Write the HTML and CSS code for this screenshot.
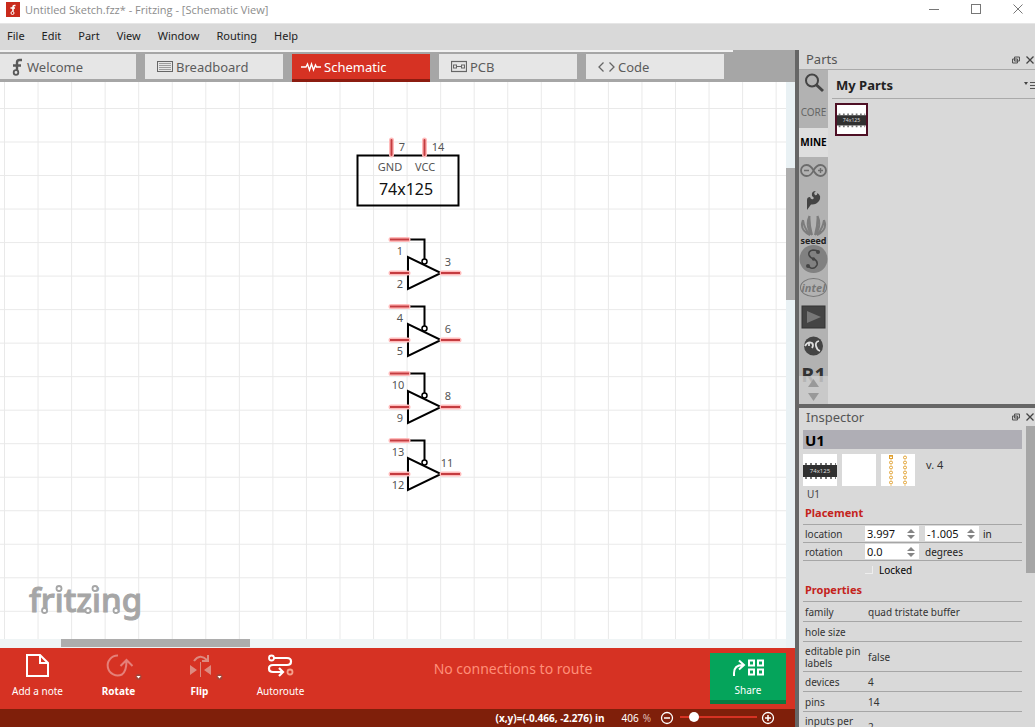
FILE: index.html
```html
<!DOCTYPE html>
<html lang="en">
<head>
<meta charset="utf-8">
<title>Untitled Sketch.fzz* - Fritzing - [Schematic View]</title>
<link rel="stylesheet" href="styles.css">
</head>
<body>
<div class="app">
  <header class="titlebar">
    <svg class="app-icon" width="14" height="15" viewBox="0 0 14 15"><rect width="14" height="15" fill="#c92a1c"/><path d="M9.500 3.500H8.500Q7 3.500 7 5V9.500M4.500 6H9" fill="none" stroke="#fff" stroke-width="1.600"/><circle cx="6.500" cy="11" r="1.500" fill="none" stroke="#fff"/></svg>
    <h1 class="title">Untitled Sketch.fzz* - Fritzing - [Schematic View]</h1>
    <div class="window-buttons">
      <button type="button" aria-label="Minimize"><svg width="10" height="10"><path d="M0 5.500H10" stroke="#777"/></svg></button>
      <button type="button" aria-label="Maximize"><svg width="10" height="10"><rect x=".5" y=".5" width="9" height="9" fill="none" stroke="#777"/></svg></button>
      <button type="button" aria-label="Close"><svg width="10" height="10"><path d="M.5.5L9.500 9.500M9.500.5L.5 9.500" stroke="#777"/></svg></button>
    </div>
  </header>
  <nav class="menubar">
    <button type="button">File</button><button type="button">Edit</button><button type="button">Part</button><button type="button">View</button><button type="button">Window</button><button type="button">Routing</button><button type="button">Help</button>
  </nav>
  <div class="workspace">
    <main class="editor">
      <div class="tab-highlight"></div>
      <nav class="tabs">
        <button type="button" class="tab tab-first"><svg width="16" height="20" viewBox="0 0 16 20"><path d="M13 3H10.500Q8 3 8 5.500V14M4 8.500H12" fill="none" stroke="#595959" stroke-width="2.400"/><circle cx="7" cy="15.500" r="2.300" fill="#e6e6e6" stroke="#595959" stroke-width="1.800"/></svg>Welcome</button>
        <button type="button" class="tab"><svg width="16" height="20" viewBox="0 0 16 20"><rect x=".5" y="4.500" width="15" height="10" fill="none" stroke="#666"/><path d="M2.500 6.500H14M2.500 8.500H14M2.500 10.500H14M2.500 12.500H14" stroke="#555" stroke-dasharray="1 1"/></svg>Breadboard</button>
        <button type="button" class="tab tab-active"><svg width="20" height="20" viewBox="0 0 20 20"><path d="M0 10H5L6.500 7L8.500 13L10.500 7L12.500 13L14.500 8L15.500 10H20" fill="none" stroke="#fff" stroke-width="1.400"/></svg>Schematic</button>
        <button type="button" class="tab"><svg width="16" height="20" viewBox="0 0 16 20"><rect x=".5" y="4.500" width="15" height="10" fill="none" stroke="#666" stroke-width="1.200"/><path d="M5.500 9.500H10.500" stroke="#666"/><rect x="2.500" y="8" width="3" height="3" fill="none" stroke="#666"/><rect x="10.500" y="8" width="3" height="3" fill="none" stroke="#666"/></svg>PCB</button>
        <button type="button" class="tab"><svg width="17" height="20" viewBox="0 0 17 20"><path d="M5.500 5.500L1 10L5.500 14.500M11.500 5.500L16 10L11.500 14.500" fill="none" stroke="#666" stroke-width="1.300"/></svg>Code</button>
      </nav>
      <div class="canvas-area">
        <svg class="canvas" role="img" aria-label="Schematic">
          <defs>
            <pattern id="grid" x="4" y="26" width="33.550" height="33.520" patternUnits="userSpaceOnUse"><path d="M0 .5H34M.5 0V34" stroke="#e9e9e9" fill="none"/></pattern>
            <g id="pin"><path d="M0 0H17" stroke="#fbb" stroke-width="5" stroke-linecap="round"/><path d="M-1 0H18" stroke="#c43c40" stroke-width="2"/></g>
            <g id="buffer">
              <path d="M408 157.500H424.500V177" class="wire"/>
              <path d="M408 175V207L441 191Z" class="wire"/>
              <circle cx="424.500" cy="179.500" r="2.500" fill="#fff" stroke="#000" stroke-width="1.500"/>
              <use href="#pin" x="391" y="157.500"/><use href="#pin" x="391" y="191"/><use href="#pin" x="442" y="191"/>
            </g>
          </defs>
          <rect width="100%" height="100%" fill="url(#grid)"/>
          <rect x="357.500" y="73.500" width="101" height="50" class="wire"/>
          <g stroke-linecap="round"><path d="M391.500 58V73M424.500 58V73" stroke="#fbb" stroke-width="5"/><path d="M391.500 58V73M424.500 58V73" stroke="#c43c40" stroke-width="2"/></g>
          <g class="pin-text">
            <text x="402" y="69">7</text><text x="438" y="69">14</text>
            <text x="390" y="89">GND</text><text x="425" y="89">VCC</text>
            <text x="400" y="173">1</text><text x="400" y="206">2</text><text x="448" y="184">3</text>
            <text x="400" y="240">4</text><text x="400" y="273">5</text><text x="448" y="251">6</text>
            <text x="398" y="307">10</text><text x="400" y="340">9</text><text x="448" y="318">8</text>
            <text x="398" y="374">13</text><text x="398" y="407">12</text><text x="447" y="385">11</text>
          </g>
          <text x="406" y="113" class="chip-name">74x125</text>
          <use href="#buffer"/><use href="#buffer" y="67"/><use href="#buffer" y="134"/><use href="#buffer" y="201"/>
        </svg>
        <svg class="watermark" width="120" height="40" viewBox="0 0 120 40"><text x="0" y="30">fritzing</text><g fill="#fff" stroke="#a6a6a6" stroke-width="1.800"><circle cx="30" cy="6.500" r="2.500"/><circle cx="66" cy="6.500" r="2.500"/><circle cx="15.500" cy="28.500" r="2.500"/><circle cx="59" cy="28.500" r="2.500"/><circle cx="87" cy="28.500" r="2.500"/></g></svg>
        <div class="vscroll"><div class="vthumb"></div></div>
        <div class="hscroll"><div class="hthumb"></div></div>
      </div>
      <div class="toolbar">
        <div class="tools">
          <button type="button" class="tool"><svg width="36" height="28" viewBox="0 0 36 28"><path d="M7 3H20L28 11V24H7Z M20 3V11H28" fill="none" stroke="#fff" stroke-width="2"/></svg>Add a note</button>
          <button type="button" class="tool tool-heavy"><svg width="56" height="28" viewBox="0 0 56 28"><path d="M27 3.500A10 10 0 1 0 31 22.500Q35.500 19 35.500 9M29.500 14L35.500 8L41.500 14" fill="none" stroke="#e58079" stroke-width="2"/><circle cx="47.500" cy="25" r="3" fill="#a64538"/><path d="M45.500 24H49.500L47.500 26.500Z" fill="#fff"/></svg>Rotate</button>
          <button type="button" class="tool tool-heavy"><svg width="56" height="28" viewBox="0 0 56 28"><path d="M22 9Q28 1 35 8M36 3V9H30" fill="none" stroke="#dd8a80" stroke-width="2"/><path d="M28.500 10V25" stroke="#dd8a80"/><path d="M18 13L25 18L18 23ZM39 13L32 18L39 23Z" fill="#dd8a80"/><circle cx="47.500" cy="25" r="3" fill="#a64538"/><path d="M45.500 24H49.500L47.500 26.500Z" fill="#fff"/></svg>Flip</button>
          <button type="button" class="tool"><svg width="36" height="28" viewBox="0 0 36 28"><path d="M11 6H24Q28 6 28 9.500T24 13H10Q6 13 6 16.500T10 20H19M16 16L20 20L16 24" fill="none" stroke="#fff" stroke-width="2.200"/><circle cx="8.500" cy="6" r="2.500" fill="none" stroke="#fff" stroke-width="1.800"/><circle cx="27" cy="20" r="2.500" fill="none" stroke="#f5a08c" stroke-width="1.800"/></svg>Autoroute</button>
        </div>
        <p class="routing-status">No connections to route</p>
        <button type="button" class="share"><svg width="34" height="18" viewBox="0 0 34 18"><path d="M3 17V14Q3 6 12 6M8 1.500L13 6L8 10.500" fill="none" stroke="#fff" stroke-width="2"/><path d="M18 1.500H23V6.500H18ZM27 1.500H32V6.500H27ZM18 10.500H23V15.500H18ZM27 10.500H32V15.500H27Z" fill="none" stroke="#fff" stroke-width="2"/></svg>Share</button>
      </div>
      <footer class="statusbar">
        <span class="coords">(x,y)=(-0.466, -2.276) in</span>
        <span class="zoom-value">406</span><span class="percent">%</span>
        <button type="button" class="zoom-button" aria-label="Zoom out"><svg width="14" height="14" viewBox="0 0 14 14"><circle cx="7" cy="7" r="5.500" fill="none" stroke="#fff" stroke-width="1.300"/><path d="M4 7H10" stroke="#fff" stroke-width="1.500"/></svg></button>
        <input class="zoom-slider" type="range" min="0" max="100" value="14" aria-label="Zoom">
        <button type="button" class="zoom-button" aria-label="Zoom in"><svg width="14" height="14" viewBox="0 0 14 14"><circle cx="7" cy="7" r="5.500" fill="none" stroke="#fff" stroke-width="1.300"/><path d="M4 7H10M7 4V10" stroke="#fff" stroke-width="1.500"/></svg></button>
      </footer>
    </main>
    <aside class="docks">
      <section class="dock parts">
        <div class="dock-header"><h2>Parts</h2>
          <button type="button" aria-label="Float parts"><svg width="8" height="8" viewBox="0 0 8 8"><path d="M2.500 1H7.500V5H2.500ZM.5 3H5.500V7H.5Z" fill="#ccc" stroke="#555"/></svg></button>
          <button type="button" aria-label="Close parts"><svg width="8" height="8" viewBox="0 0 8 8"><path d="M.5.5L7.500 7.500M7.500.5L.5 7.500" stroke="#444" stroke-width="1.300"/></svg></button>
        </div>
        <div class="parts-body">
          <nav class="bins">
            <button type="button" class="bin" aria-label="Search"><svg width="29" height="29" viewBox="0 0 29 29"><circle cx="13" cy="10.500" r="6" fill="none" stroke="#444" stroke-width="2"/><path d="M17 14.500L24 21" stroke="#444" stroke-width="3"/></svg></button>
            <button type="button" class="bin bin-core">CORE</button>
            <button type="button" class="bin bin-mine">MINE</button>
            <button type="button" class="bin" aria-label="Arduino"><svg width="29" height="29" viewBox="0 0 29 29"><path d="M14.500 13.500C12 9 9.500 8 7.500 8A5.500 5.500 0 0 0 7.500 19C10 19 12.500 18 14.500 13.500C17 9 19.500 8 21.500 8A5.500 5.500 0 0 1 21.500 19C19 19 17 18 14.500 13.500Z" fill="none" stroke="#6c6c6c" stroke-width="1.800"/><path d="M5 13.500H10M19 13.500H24M21.500 11V16" stroke="#6c6c6c" stroke-width="1.400"/></svg></button>
            <button type="button" class="bin" aria-label="SparkFun"><svg width="29" height="29" viewBox="0 0 29 29"><path d="M8 24V14Q8 11 11 11Q12 14 14 13Q16 12 13 10Q12 5 17 5Q14 7 16 9Q18 10 18.500 7Q23 10 20 15Q17 19 12 18.500Z" fill="#444"/></svg></button>
            <button type="button" class="bin bin-seeed"><svg width="29" height="22" viewBox="0 0 29 22"><g fill="none" stroke="#7c7c7c" stroke-width="2"><path d="M4 5Q0 15 11 20Q5 13 4 5M25 5Q29 15 18 20Q24 13 25 5M10.500 1Q6 11 13 20Q10 10 10.500 1M18.500 1Q23 11 16 20Q19 10 18.500 1"/></g></svg><span>seeed</span></button>
            <button type="button" class="bin" aria-label="Snootlab"><svg width="29" height="29" viewBox="0 0 29 29"><circle cx="14.500" cy="15" r="14" fill="#818181"/><path d="M19 8Q18 6 14 6Q9 7 10 11Q11 14 15 15Q19 17 18 21Q16 25 12 24Q9 23 9 21" fill="none" stroke="#444" stroke-width="1.600"/><circle cx="19" cy="8" r="2" fill="#444"/><circle cx="9" cy="22" r="2" fill="#444"/><circle cx="14.500" cy="15" r="1.700" fill="#444"/></svg></button>
            <button type="button" class="bin bin-intel">intel</button>
            <button type="button" class="bin" aria-label="Picaxe"><svg width="29" height="29" viewBox="0 0 29 29"><rect x="3" y="4" width="23" height="22" fill="#444" stroke="#333"/><path d="M8 9L22 15L8 21Z" fill="#777"/></svg></button>
            <button type="button" class="bin" aria-label="Contributors"><svg width="29" height="29" viewBox="0 0 29 29"><circle cx="14.500" cy="15" r="9.500" fill="#444"/><path d="M6 15Q9 10 13 12Q15 14 13 17M10 12V15M20 10Q16 11 17 15T21 20" fill="none" stroke="#ddd" stroke-width="1.800"/></svg></button>
            <button type="button" class="bin bin-last">R1</button>
            <button type="button" class="bin-scroll" aria-label="Scroll bins"><svg width="29" height="28" viewBox="0 0 29 28"><path d="M9 11H20L14.500 3ZM9 17H20L14.500 25Z" fill="#999"/></svg></button>
          </nav>
          <div class="bin-content">
            <div class="bin-title"><h3>My Parts</h3><button type="button" aria-label="Bin menu"><svg width="11" height="9" viewBox="0 0 11 9"><path d="M0 1H4L2 4Z" fill="#444"/><path d="M6 1.500H11M6 4.500H11M6 7.500H11" stroke="#555"/></svg></button></div>
            <button type="button" class="part" aria-label="74x125"><svg width="29" height="29" viewBox="0 0 34 32"><use href="#chip"/></svg></button>
          </div>
        </div>
      </section>
      <section class="dock inspector">
        <div class="dock-header"><h2>Inspector</h2>
          <button type="button" aria-label="Float inspector"><svg width="8" height="8" viewBox="0 0 8 8"><path d="M2.500 1H7.500V5H2.500ZM.5 3H5.500V7H.5Z" fill="#ccc" stroke="#555"/></svg></button>
          <button type="button" aria-label="Close inspector"><svg width="8" height="8" viewBox="0 0 8 8"><path d="M.5.5L7.500 7.500M7.500.5L.5 7.500" stroke="#444" stroke-width="1.300"/></svg></button>
        </div>
        <div class="inspector-body">
          <div class="inspector-content">
            <h3 class="part-name">U1</h3>
            <div class="views">
              <svg width="34" height="32" viewBox="0 0 34 32"><defs><g id="chip"><rect width="34" height="32" fill="#fff"/><path d="M2 10H33M2 24H33" stroke="#777" stroke-width="2" stroke-dasharray="2 3"/><rect y="11" width="34" height="12" fill="#303030"/><text x="17" y="19" class="chip-label">74x125</text></g></defs><use href="#chip"/></svg>
              <svg width="34" height="32"><rect width="34" height="32" fill="#fff"/></svg>
              <svg width="34" height="32"><defs><pattern id="pads" width="14" height="5" x="3" y="1" patternUnits="userSpaceOnUse"><circle cx="7" cy="2.500" r="1.500" fill="none" stroke="#e0a030"/></pattern></defs><rect width="34" height="32" fill="#fff"/><rect x="3" y="1" width="28" height="31" fill="url(#pads)"/><rect x="8.500" y="1.500" width="3" height="3" fill="none" stroke="#e0a030"/></svg>
              <span>v. 4</span>
            </div>
            <p class="instance">U1</p>
            <h4>Placement</h4>
            <div class="placement">
              <div class="field"><label for="loc-x">location</label>
                <div class="spin"><input id="loc-x" type="text" value="3.997"><svg width="8" height="12" viewBox="0 0 8 12"><path d="M0 5H8L4 1ZM0 7H8L4 11Z" fill="#858585"/></svg></div>
                <div class="spin"><input type="text" value="-1.005" aria-label="location y"><svg width="8" height="12" viewBox="0 0 8 12"><path d="M0 5H8L4 1ZM0 7H8L4 11Z" fill="#858585"/></svg></div>
                <span class="unit-in">in</span></div>
              <div class="field"><label for="rot">rotation</label>
                <div class="spin"><input id="rot" type="text" value="0.0"><svg width="8" height="12" viewBox="0 0 8 12"><path d="M0 5H8L4 1ZM0 7H8L4 11Z" fill="#858585"/></svg></div>
                <span>degrees</span></div>
              <label class="locked"><input type="checkbox">Locked</label>
            </div>
            <h4 class="properties-heading">Properties</h4>
            <table class="properties">
              <tr><th scope="row">family</th><td>quad tristate buffer</td></tr>
              <tr><th scope="row">hole size</th><td></td></tr>
              <tr><th scope="row">editable pin labels</th><td>false</td></tr>
              <tr><th scope="row">devices</th><td>4</td></tr>
              <tr><th scope="row">pins</th><td>14</td></tr>
              <tr><th scope="row">inputs per gate</th><td>2</td></tr>
            </table>
          </div>
          <div class="inspector-scroll"></div>
        </div>
      </section>
    </aside>
  </div>
</div>
</body>
</html>
```
FILE: styles.css
```css
* { box-sizing: border-box; }
body { margin: 0; font: 11px "Noto Sans", sans-serif; color: #222; background: #d9d9d9; }
h1, h2, h3, h4, p { margin: 0; font-weight: 400; }
button { border: 0; padding: 0; background: none; font: inherit; color: inherit; }
svg { display: block; flex: none; }
.app { height: 100vh; display: flex; flex-direction: column; overflow: hidden; }
.titlebar { height: 24px; flex: none; background: #fff; display: flex; align-items: flex-start; padding: 2px 12px 0 6px; border-bottom: 1px solid #e6e6e6; }
.title { flex: 1; font: 11px/16px "Open Sans", sans-serif; color: #8c8c8c; padding-left: 5px; }
.window-buttons { display: flex; gap: 32px; padding-top: 2px; }
.menubar { height: 26px; flex: none; display: flex; align-items: center; gap: 17px; padding: 0 0 3px 7px; }
.workspace { flex: 1; min-height: 0; display: grid; grid-template-columns: 1fr 240px; }

.editor { min-width: 0; min-height: 0; display: flex; flex-direction: column; background: #a6a6a6; }
.tab-highlight { height: 2px; flex: none; background: #f2f2f2; margin-right: 62px; }
.tabs { height: 30px; flex: none; display: flex; gap: 9px; padding-top: 2px; }
.tab { width: 138px; height: 25px; background: #e6e6e6; color: #5c5c5c; font-size: 13px; display: flex; align-items: center; gap: 3px; padding-left: 12px; }
.tab-first { width: 136px; padding-left: 9px; gap: 2px; }
.tab-active { height: 28px; background: #d63223; color: #fff; border-bottom: 3px solid #8c1c10; padding-left: 9px; }
.canvas-area { flex: 1; min-height: 0; position: relative; display: grid; grid-template: 1fr 9px / 1fr 9px; background: #fff; }
.canvas { width: 100%; height: 100%; }
.wire { fill: none; stroke: #000; stroke-width: 2; }
.pin-text { font-size: 11px; fill: #555; text-anchor: middle; }
.chip-name { font-size: 16px; fill: #111; text-anchor: middle; }
.watermark { position: absolute; left: 29px; bottom: 26px; font: 500 33px "Noto Sans", sans-serif; fill: #a6a6a6; overflow: visible; }
.watermark text { stroke: #a6a6a6; }
.vscroll { grid-area: 1 / 2 / 3 / 3; background: #e9f1f4; padding-top: 86px; }
.vthumb { height: 132px; background: #adadad; }
.hscroll { grid-area: 2 / 1; background: #eff4f5; padding-left: 61px; }
.hthumb { width: 189px; height: 8px; background: #adadad; }

.toolbar { height: 61px; flex: none; background: #d63223; display: flex; color: #fff; }
.tools { display: flex; margin-left: -3px; }
.tool { width: 81px; display: flex; flex-direction: column; align-items: center; font-size: 10px; line-height: 16px; padding-top: 4px; gap: 3px; }
.tool-heavy { font-weight: 700; }
.routing-status { flex: 1; text-align: center; font-size: 14px; line-height: 20px; padding: 11px 5px 0 0; color: #ff8f78; }
.share { width: 76px; height: 51px; margin: 5px 9px 0 0; background: #05a45b; border-bottom: 4px solid #087a41; display: flex; flex-direction: column; align-items: center; gap: 6px; padding-top: 6px; font-size: 10px; line-height: 14px; }
.statusbar { height: 18px; flex: none; background: #7f1f0a; color: #fff; display: flex; align-items: center; justify-content: flex-end; padding-right: 20px; font-size: 10px; }
.coords { font-weight: 700; margin-right: 17px; }
.zoom-value { margin-right: 4px; }
.percent { margin-right: 9px; color: #ddb8ae; }
.zoom-slider { appearance: none; width: 77px; height: 10px; margin: 0 4px 2px 6px; background: linear-gradient(#d63223, #d63223) center / 100% 2px no-repeat; }
.zoom-slider::-webkit-slider-thumb { appearance: none; width: 10px; height: 10px; border-radius: 50%; background: #fff; }

.docks { min-width: 0; min-height: 0; display: flex; flex-direction: column; border-left: 4px solid #666; overflow: hidden; }
.dock-header { height: 19px; flex: none; display: flex; align-items: center; gap: 6px; padding-left: 7px; margin-right: 1px; }
.dock-header h2 { flex: 1; font-size: 13px; line-height: 19px; color: #555; }
.parts { height: 354px; flex: none; display: flex; flex-direction: column; }
.parts-body { flex: 1; min-height: 0; display: grid; grid-template-columns: 29px 1fr; border-top: 1px solid #aaa; }
.bins { position: relative; min-height: 0; overflow: hidden; background: #b2b2b2; }
.bin { width: 29px; height: 29px; display: flex; align-items: center; justify-content: center; }
.bin-core { font: 10px "Noto Sans", sans-serif; color: #666; padding-bottom: 3px; }
.bin-mine { background: #dedede; font: 700 10px "Open Sans", sans-serif; color: #000; padding-bottom: 2px; }
.bin-seeed { flex-direction: column; font: 700 9px/8px "Open Sans", sans-serif; }
.bin-intel { font: italic 700 11px/16px "Open Sans", sans-serif; color: #777; width: 27px; height: 19px; margin: 5px 1px; border: 1px solid #777; border-radius: 50%; }
.bin-last { font: 700 20px "Open Sans", sans-serif; color: #333; }
.bin-scroll { position: absolute; left: 0; bottom: 0; background: rgba(205, 205, 205, .85); }
.bin-content { padding-left: 4px; }
.bin-title { height: 29px; display: flex; align-items: center; border-bottom: 1px solid #aaa; padding: 2px 0 0 4px; }
.bin-title h3 { flex: 1; font-size: 13px; font-weight: 700; }
.part { margin: 4px 3px; border: 2px solid #4e1025; background: #fff; display: block; }
.chip-label { font: 6px "Noto Sans", sans-serif; fill: #ddd; text-anchor: middle; }

.inspector { flex: 1; min-height: 0; display: flex; flex-direction: column; border-top: 4px solid #666; }
.inspector .dock-header { height: 18px; }
.inspector-body { flex: 1; min-height: 0; display: grid; grid-template-columns: 1fr 9px; gap: 4px; overflow: hidden; font-size: 10px; }
.inspector-content { padding: 4px 0 0 4px; min-width: 0; }
.part-name { height: 19px; background: #afaeb5; font-size: 15px; line-height: 20px; font-weight: 700; padding-left: 2px; color: #000; }
.views { display: flex; gap: 5px; padding-top: 5px; }
.views span { font-size: 11px; padding: 3px 0 0 6px; color: #333; }
.instance { font-size: 10px; line-height: 16px; padding-left: 4px; color: #444; }
.inspector h4 { font-size: 11px; line-height: 16px; font-weight: 700; color: #c4231c; padding: 3px 0 0 2px; height: 22px; }
.field { height: 18px; border-top: 1px solid #a6a6a6; display: flex; align-items: center; gap: 6px; padding-left: 2px; }
.field label { width: 54px; color: #333; }
.field .unit-in { margin-left: -2px; }
.spin { width: 54px; height: 15px; background: #fff; display: flex; align-items: center; padding-right: 4px; }
.spin input { flex: 1; width: 0; min-width: 0; border: 0; padding: 0 0 0 2px; background: none; font: 11px/15px "Noto Sans", sans-serif; color: #111; }
.locked { height: 19px; border-top: 1px solid #a6a6a6; display: flex; align-items: center; gap: 6px; padding-left: 62px; color: #000; }
.locked input { appearance: none; width: 8px; height: 8px; margin: 0; border-right: 1px solid #eee; border-bottom: 1px solid #eee; }
.properties { width: 100%; border-collapse: collapse; line-height: 12px; }
.properties th { width: 63px; font-weight: 400; text-align: left; }
.properties th, .properties td { height: 20px; border-top: 1px solid #a6a6a6; padding: 3px 0 2px 2px; color: #333; }
.inspector-scroll { height: 147px; background: #a6a6a6; }
```
